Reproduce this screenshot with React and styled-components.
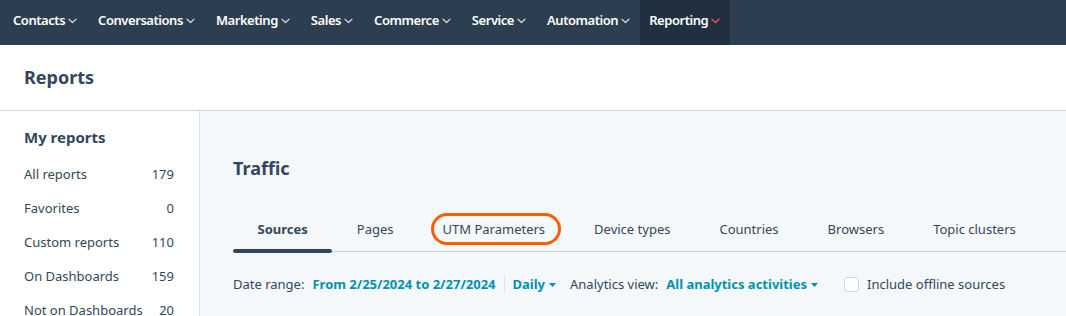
import React from 'react'
import styled, { createGlobalStyle } from 'styled-components'

const Global = createGlobalStyle`
body{
    margin:0;
    font-family:"Noto Sans","Liberation Sans",sans-serif;
    background:#fff;
}
*{box-sizing:border-box;}
`

const navItems = ['Contacts','Conversations','Marketing','Sales','Commerce','Service','Automation','Reporting']
const reports = [
    {label:'All reports',count:179},
    {label:'Favorites',count:0},
    {label:'Custom reports',count:110},
    {label:'On Dashboards',count:159},
    {label:'Not on Dashboards',count:20},
]
const tabs = ['Sources','Pages','UTM Parameters','Device types','Countries','Browsers','Topic clusters']

function Chevron({active}){
    return(
        <svg width="9" height="6" viewBox="0 0 9 6" fill="none">
            <path d="M1 1.2l3.5 3.3L8 1.2" stroke={active?'#f2545b':'#cbd6e2'} strokeWidth="1.2" strokeLinecap="round" strokeLinejoin="round"/>
        </svg>
    )
}

function Caret(){
    return(
        <svg width="7" height="4" viewBox="0 0 7 4"><path d="M0 0h7L3.5 4z" fill="currentColor"/></svg>
    )
}

function App(){
    return(
        <>
        <Global/>
        <Page>
            <Nav>
                {navItems.map(n=>(
                    <NavItem key={n} active={n==='Reporting'}>
                        {n}
                        <Chevron active={n==='Reporting'}/>
                    </NavItem>
                ))}
            </Nav>
            <Header>
                <h1>Reports</h1>
            </Header>
            <Body>
                <Sidebar>
                    <SideTitle>My reports</SideTitle>
                    {reports.map(r=>(
                        <SideRow key={r.label}>
                            <span>{r.label}</span>
                            <span>{r.count}</span>
                        </SideRow>
                    ))}
                </Sidebar>
                <Main>
                    <Title>Traffic</Title>
                    <Tabs>
                        {tabs.map(t=>(
                            <Tab key={t} active={t==='Sources'}>
                                {t}
                                {t==='UTM Parameters' && <Highlight/>}
                            </Tab>
                        ))}
                    </Tabs>
                    <Filters>
                        <Label>Date range:</Label>
                        <Link>From 2/25/2024 to 2/27/2024</Link>
                        <Divider/>
                        <Link>Daily <Caret/></Link>
                        <Label className="gap">Analytics view:</Label>
                        <Link>All analytics activities <Caret/></Link>
                        <Check>
                            <Box/>
                            <span>Include offline sources</span>
                        </Check>
                    </Filters>
                </Main>
            </Body>
        </Page>
        </>
    )
}

const Page=styled.div`
width:1066px;
height:316px;
overflow:hidden;
display:flex;
flex-direction:column;
color:#33475b;
`
const Nav=styled.nav`
height:45px;
flex-shrink:0;
background-color:#2d3e50;
display:flex;
padding-left:2px;
`
const NavItem=styled.div`
display:flex;
align-items:center;
gap:3px;
padding:0 10px 5px 11px;
color:#fff;
font-size:13px;
font-weight:600;
letter-spacing:-0.45px;
background-color:${props=>props.active?'#213040':'transparent'};
${props=>props.active && 'padding:0 10px 5px 9px;'}
svg{margin-top:2px;}
`
const Header=styled.header`
height:66px;
flex-shrink:0;
border-bottom:1px solid #cbd6e2;
display:flex;
align-items:center;
padding-left:24px;
h1{
    margin:0 0 2px 0;
    font-size:18px;
    font-weight:700;
    color:#33475b;
}
`
const Body=styled.div`
flex:1;
display:flex;
min-height:0;
`
const Sidebar=styled.aside`
width:200px;
flex-shrink:0;
border-right:1px solid #dfe3eb;
padding:16px 25px 0 24px;
`
const SideTitle=styled.div`
font-size:15px;
font-weight:700;
color:#33475b;
margin-bottom:16px;
`
const SideRow=styled.div`
display:flex;
justify-content:space-between;
font-size:13px;
height:34px;
line-height:22px;
color:#33475b;
`
const Main=styled.main`
flex:1;
background-color:#f5f8fa;
padding:44px 0 0 33px;
`
const Title=styled.div`
font-size:18px;
font-weight:700;
color:#33475b;
height:26px;
line-height:26px;
`
const Tabs=styled.div`
display:flex;
margin-top:36px;
border-bottom:1px solid #cbd6e2;
`
const Tab=styled.div`
position:relative;
padding:0 24.5px 10px;
line-height:24px;
font-size:13px;
font-weight:${props=>props.active?700:400};
color:#33475b;
&::after{
    content:'';
    display:${props=>props.active?'block':'none'};
    position:absolute;
    left:0;
    right:0;
    bottom:-2px;
    height:4px;
    border-radius:2px;
    background-color:#33475b;
}
`
const Highlight=styled.span`
position:absolute;
left:13px;
right:9px;
top:-4px;
height:32px;
border:3px solid #ff5c00;
border-radius:16px;
`
const Filters=styled.div`
display:flex;
align-items:center;
margin-top:20px;
font-size:13px;
height:24px;
`
const Label=styled.span`
color:#33475b;
margin-right:8px;
&.gap{margin-left:14px;}
`
const Link=styled.span`
display:inline-flex;
align-items:center;
gap:4px;
color:#0091ae;
font-weight:700;
svg{margin-top:2px;}
`
const Divider=styled.span`
width:1px;
height:18px;
background-color:#dfe3eb;
margin:0 8px;
`
const Check=styled.label`
display:flex;
align-items:center;
gap:8px;
margin-left:26px;
color:#33475b;
`
const Box=styled.span`
width:15px;
height:15px;
border:1px solid #cbd6e2;
border-radius:3px;
background-color:#fff;
`

export default App
